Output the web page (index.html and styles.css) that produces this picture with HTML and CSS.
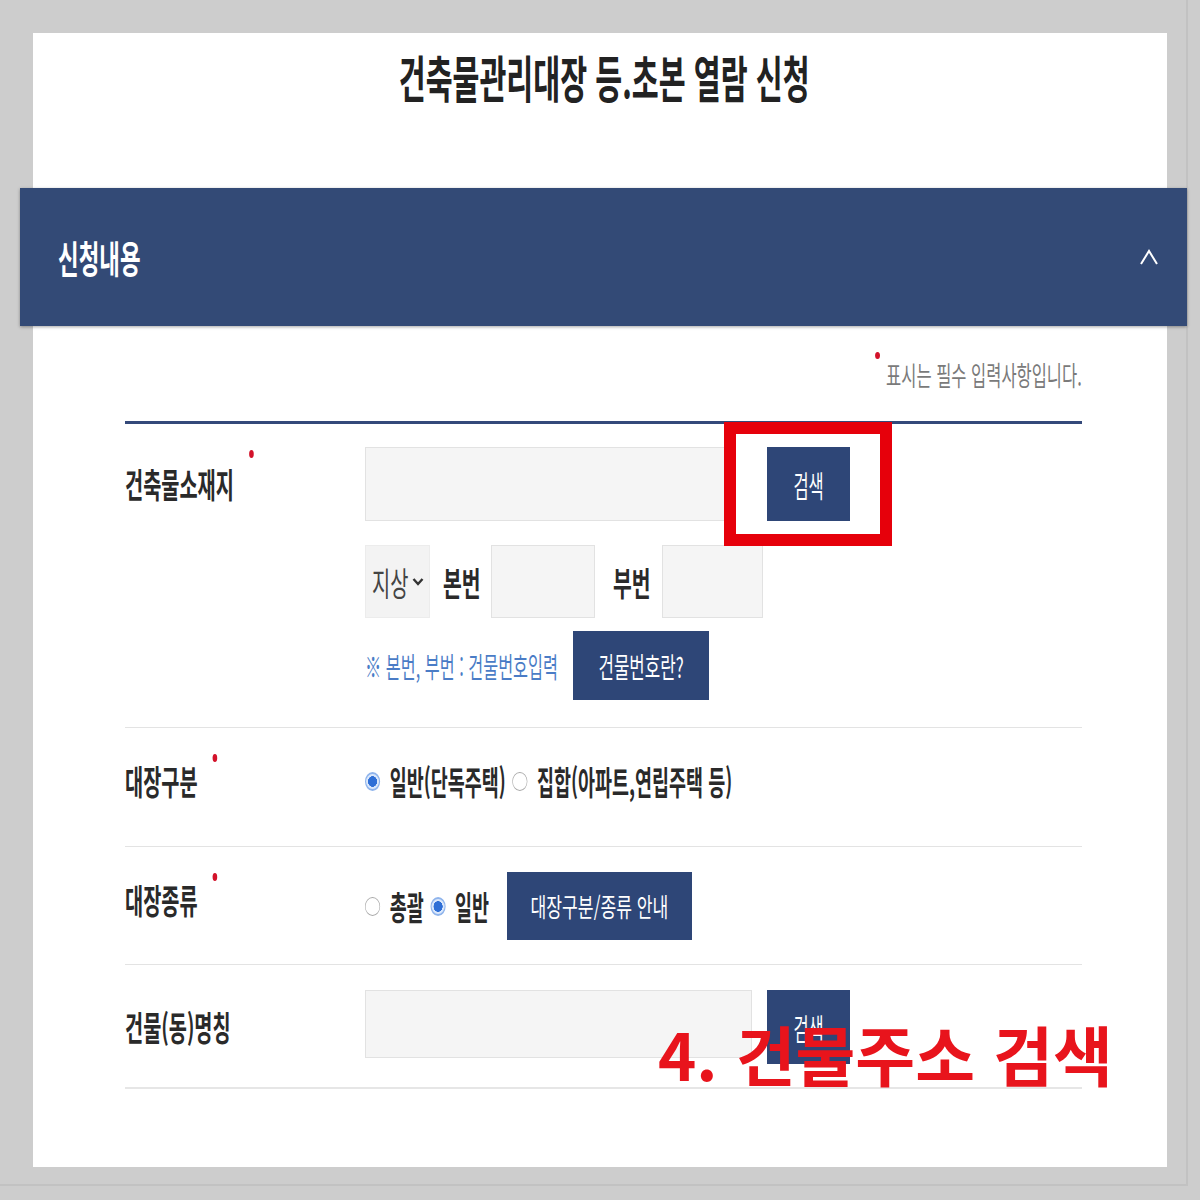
FILE: index.html
```html
<!DOCTYPE html>
<html lang="ko">
<head>
<meta charset="utf-8">
<title>건축물관리대장 등.초본 열람 신청</title>
<link rel="stylesheet" href="styles.css">
</head>
<body>
<div class="frame">
  <div class="panel">
    <h1 class="title"><span class="sq sq-c title-text">건축물관리대장 등.초본 열람 신청</span></h1>

    <div class="bar">
      <span class="sq bar-text">신청내용</span>
      <svg class="caret" width="20" height="18" viewBox="0 0 20 18"><polyline points="2,16 10,3 18,16" fill="none" stroke="#fff" stroke-width="2"/></svg>
    </div>

    <div class="content">
      <p class="note"><span class="sq sq-r note-text">표시는 필수 입력사항입니다.</span></p>

      <div class="form">
        <div class="row row-addr">
          <div class="label label-top"><span class="sq lbl req">건축물소재지</span></div>
          <div class="field col">
            <div class="line">
              <div class="input input-addr"></div>
              <div class="btn-wrap">
                <button class="btn btn-search"><span class="sq sq-c t-search">검색</span></button>
                <div class="highlight"></div>
              </div>
            </div>
            <div class="line line-num">
              <div class="select"><span class="sq sel-text">지상</span><svg class="chev" width="12" height="9" viewBox="0 0 12 9"><polyline points="1.5,2 6,7 10.5,2" fill="none" stroke="#333" stroke-width="2.4"/></svg></div>
              <div class="num-label num-label-1"><span class="sq lbl-sm">본번</span></div>
              <div class="input input-num1"></div>
              <div class="num-label num-label-2"><span class="sq lbl-sm">부번</span></div>
              <div class="input input-num2"></div>
            </div>
            <div class="line line-hint">
              <div class="hint"><span class="sq hint-text">※ 본번, 부번 : 건물번호입력</span></div>
              <button class="btn btn-info"><span class="sq sq-c t-info">건물번호란?</span></button>
            </div>
          </div>
        </div>

        <div class="row row-kind">
          <div class="label"><span class="sq lbl req req-low">대장구분</span></div>
          <div class="field">
            <span class="sq radios"><i class="radio on"></i><span class="opt">일반(단독주택)</span><i class="radio"></i><span class="opt">집합(아파트,연립주택 등)</span></span>
          </div>
        </div>

        <div class="row row-type">
          <div class="label label-up"><span class="sq lbl req req-low">대장종류</span></div>
          <div class="field">
            <div class="radio-box"><span class="sq radios"><i class="radio"></i><span class="opt">총괄</span><i class="radio on"></i><span class="opt">일반</span></span></div>
            <button class="btn btn-guide"><span class="sq sq-c t-guide">대장구분/종류 안내</span></button>
          </div>
        </div>

        <div class="row row-name">
          <div class="label label-top2"><span class="sq lbl">건물(동)명칭</span></div>
          <div class="field field-name">
            <div class="input input-name"></div>
            <button class="btn btn-search2"><span class="sq sq-c t-search">검색</span></button>
          </div>
        </div>
      </div>
    </div>

    <div class="annotation">4. 건물주소 검색</div>
  </div>
</div>
</body>
</html>
```

FILE: styles.css
```css
html, body {
  margin: 0;
  padding: 0;
}
body {
  width: 1200px;
  height: 1200px;
  overflow: hidden;
  background: #cdcdcd;
  font-family: "Noto Sans CJK KR", "Noto Sans", sans-serif;
  color: #2b2b2b;
}

.frame {
  width: 1188px;
  height: 1186px;
  box-sizing: border-box;
  padding: 33px 0 0 33px;
  border-right: 2px solid #c2c2c2;
  border-bottom: 2px solid #c2c2c2;
}

.panel {
  position: relative;
  width: 1134px;
  height: 1134px;
  background: #fff;
}

/* horizontally condensed text, like the reference capture */
.sq {
  display: inline-block;
  white-space: nowrap;
  transform: scaleX(var(--sx, .58));
  transform-origin: left center;
}
.sq-c { transform-origin: center center; }
.sq-r { transform-origin: right center; }

/* title */
.title {
  margin: 0;
  height: 155px;
  box-sizing: border-box;
  padding: 16px 0 0 8px;
  text-align: center;
  font-size: 50px;
  line-height: 54px;
  font-weight: 700;
  color: #222;
}
.title-text { --sx: .585; }

/* section bar */
.bar {
  margin: 0 -20px 0 -13px;
  height: 138px;
  background: #334a76;
  display: flex;
  align-items: center;
  justify-content: space-between;
  padding: 0 28px 0 38px;
  box-shadow: 0 1px 3px rgba(0, 0, 0, .35);
}
.bar-text {
  --sx: .59;
  color: #fff;
  font-size: 38px;
  font-weight: 700;
  line-height: 44px;
}
.caret { display: block; }

/* content */
.content {
  padding: 0 85px 0 92px;
}

.note {
  margin: 34px 0 31px;
  height: 30px;
  text-align: right;
  font-size: 27px;
  line-height: 30px;
  color: #7a7a7a;
}
.note-text {
  --sx: .61;
  position: relative;
}
.note-text::before {
  content: "";
  position: absolute;
  right: 100%;
  top: -8px;
  margin-right: 10px;
  width: 8px;
  height: 7px;
  border-radius: 50%;
  background: #d3122a;
}

.form {
  border-top: 3px solid #34497a;
}

.row {
  display: grid;
  grid-template-columns: 240px 1fr;
  border-bottom: 1px solid #e3e3e3;
}

.label {
  display: flex;
  align-items: center;
}
.lbl {
  --sx: .58;
  position: relative;
  font-size: 34px;
  line-height: 40px;
  font-weight: 700;
  color: #2a2a2a;
}
.req::after {
  content: "";
  position: absolute;
  left: 100%;
  top: -14px;
  margin-left: 26px;
  width: 8px;
  height: 8px;
  border-radius: 50%;
  background: #d3122a;
}
.req-low::after {
  top: -7px;
}

.field {
  display: flex;
  align-items: center;
}
.col {
  flex-direction: column;
  align-items: stretch;
}
.line {
  display: flex;
  align-items: center;
}

/* row 1 */
.row-addr {
  padding: 23px 0 27px;
}
.label-top {
  height: 74px;
  align-self: start;
}
.input {
  box-sizing: border-box;
  background: #f5f5f5;
  border: 1px solid #e2e2e2;
}
.input-addr {
  width: 363px;
  height: 74px;
}
.btn-wrap {
  position: relative;
  margin-left: 39px;
}
.btn {
  display: flex;
  align-items: center;
  justify-content: center;
  border: 0;
  padding: 0;
  margin: 0;
  background: #2e4677;
  color: #fff;
  font-family: inherit;
  font-weight: 400;
}
.btn-search {
  width: 83px;
  height: 74px;
}
.t-search {
  --sx: .55;
  font-size: 30px;
  line-height: 34px;
}
.highlight {
  position: absolute;
  left: -43px;
  right: -42px;
  top: -25px;
  bottom: -25px;
  border: 12px solid #e6000b;
}

.line-num {
  margin-top: 24px;
  height: 73px;
}
.select {
  box-sizing: border-box;
  width: 65px;
  height: 73px;
  background: #f3f3f3;
  border: 1px solid #ececec;
  display: flex;
  align-items: center;
  padding-left: 6px;
  position: relative;
}
.sel-text {
  --sx: .6;
  font-size: 33px;
  line-height: 38px;
  color: #444;
}
.chev {
  position: absolute;
  left: 46px;
  top: 31px;
}
.num-label {
  height: 73px;
  display: flex;
  align-items: center;
  box-sizing: border-box;
}
.num-label-1 {
  width: 61px;
  padding-left: 13px;
}
.num-label-2 {
  width: 67px;
  padding-left: 18px;
}
.lbl-sm {
  --sx: .62;
  font-size: 33px;
  line-height: 38px;
  font-weight: 700;
  color: #2a2a2a;
}
.input-num1 {
  width: 104px;
  height: 73px;
}
.input-num2 {
  width: 101px;
  height: 73px;
}

.line-hint {
  margin-top: 13px;
  height: 69px;
}
.hint {
  width: 208px;
  display: flex;
  align-items: center;
}
.hint-text {
  --sx: .58;
  font-size: 28px;
  line-height: 32px;
  color: #4a7cc6;
}
.btn-info {
  width: 136px;
  height: 69px;
}
.t-info {
  --sx: .6;
  font-size: 28px;
  line-height: 32px;
}

/* row 2 */
.row-kind {
  padding: 33px 0 47px;
  height: 38px;
  box-sizing: content-box;
}
.radios {
  --sx: .56;
  font-size: 33px;
  line-height: 38px;
  font-weight: 700;
  color: #2a2a2a;
  display: inline-flex;
  align-items: center;
}
.radio {
  display: inline-block;
  box-sizing: border-box;
  width: 27px;
  height: 19px;
  border-radius: 50%;
  border: 1.5px solid #a8a8a8;
  background: #fff;
  margin-right: 17px;
}
.radio.on {
  border: 2px solid #8fb4ec;
  background: radial-gradient(ellipse at center, #2f6fd6 0 48%, #dbe8fb 52% 100%);
}
.opt {
  margin-right: 12px;
}

/* row 3 */
.row-type {
  padding: 25px 0 24px;
}
.label-up {
  padding-bottom: 12px;
}
.radio-box {
  width: 142px;
  display: flex;
  align-items: center;
}
.btn-guide {
  width: 185px;
  height: 68px;
}
.t-guide {
  --sx: .66;
  font-size: 26px;
  line-height: 30px;
}

/* row 4 */
.row-name {
  padding: 25px 0 23px;
  border-bottom: 2px solid #e6e6e6;
}
.label-top2 {
  height: 74px;
  align-self: start;
}
.field-name {
  align-items: flex-start;
}
.input-name {
  width: 387px;
  height: 68px;
}
.btn-search2 {
  width: 83px;
  height: 74px;
  margin-left: 15px;
}

/* red annotation text laid over the form */
.annotation {
  position: absolute;
  left: 625px;
  top: 985px;
  font-size: 65px;
  line-height: 70px;
  font-weight: 700;
  color: #e8141c;
  white-space: nowrap;
}
```
